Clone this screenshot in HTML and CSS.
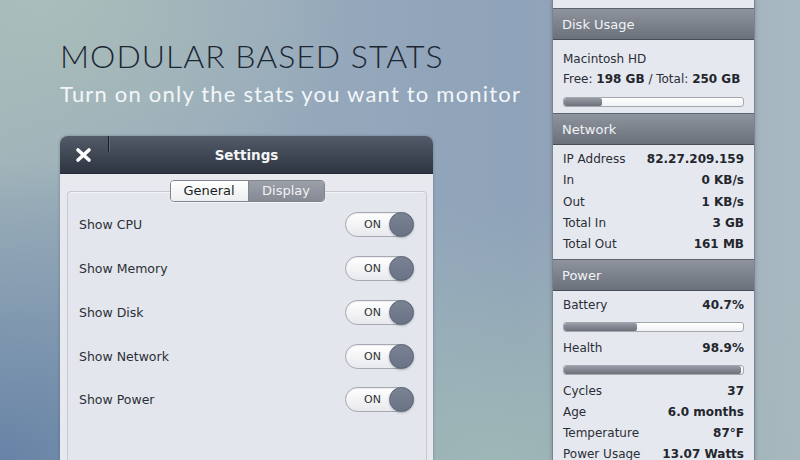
FILE: index.html
```html
<!DOCTYPE html>
<html>
<head>
<meta charset="utf-8">
<link rel="stylesheet" href="styles.css">
</head>
<body>
<div class="page">
  <div class="left">
    <h1 class="title">MODULAR BASED STATS</h1>
    <p class="subtitle">Turn on only the stats you want to monitor</p>
    <div class="window">
      <div class="titlebar">
        <div class="tb-left">
          <svg class="close" width="17" height="16" viewBox="0 0 17 16"><path d="M3 3 L14 13 M14 3 L3 13" stroke="#fff" stroke-width="3.6" stroke-linecap="round"/></svg>
          <span class="tb-divider"></span>
        </div>
        <div class="tb-title">Settings</div>
        <div></div>
      </div>
      <div class="win-body">
        <div class="segments">
          <span class="seg seg-on">General</span><span class="seg seg-off">Display</span>
        </div>
        <div class="group">
          <div class="opt"><span>Show CPU</span><span class="toggle"><span class="tg-label">ON</span><span class="knob"></span></span></div>
          <div class="opt"><span>Show Memory</span><span class="toggle"><span class="tg-label">ON</span><span class="knob"></span></span></div>
          <div class="opt"><span>Show Disk</span><span class="toggle"><span class="tg-label">ON</span><span class="knob"></span></span></div>
          <div class="opt"><span>Show Network</span><span class="toggle"><span class="tg-label">ON</span><span class="knob"></span></span></div>
          <div class="opt"><span>Show Power</span><span class="toggle"><span class="tg-label">ON</span><span class="knob"></span></span></div>
        </div>
      </div>
    </div>
  </div>
  <div class="panel">
    <div class="stub"></div>
    <div class="ph">Disk Usage</div>
    <div class="pc disk">
      <div class="row r20"><span>Macintosh HD</span></div>
      <div class="row r20"><span>Free: <b>198 GB</b> / Total: <b>250 GB</b></span></div>
      <div class="bar"><div class="fill" style="width:21%"></div></div>
    </div>
    <div class="ph">Network</div>
    <div class="pc net">
      <div class="row"><span>IP Address</span><b>82.27.209.159</b></div>
      <div class="row"><span>In</span><b>0 KB/s</b></div>
      <div class="row"><span>Out</span><b>1 KB/s</b></div>
      <div class="row"><span>Total In</span><b>3 GB</b></div>
      <div class="row"><span>Total Out</span><b>161 MB</b></div>
    </div>
    <div class="ph">Power</div>
    <div class="pc power">
      <div class="row"><span>Battery</span><b>40.7%</b></div>
      <div class="bar b-mid"><div class="fill" style="width:40.7%"></div></div>
      <div class="row"><span>Health</span><b>98.9%</b></div>
      <div class="bar b-mid"><div class="fill" style="width:98.9%"></div></div>
      <div class="row"><span>Cycles</span><b>37</b></div>
      <div class="row"><span>Age</span><b>6.0 months</b></div>
      <div class="row"><span>Temperature</span><b>87°F</b></div>
      <div class="row"><span>Power Usage</span><b>13.07 Watts</b></div>
    </div>
  </div>
</div>
</body>
</html>
```

FILE: styles.css
```css
html, body {
  margin: 0;
  padding: 0;
  width: 800px;
  height: 460px;
  overflow: hidden;
}
body {
  background:
    radial-gradient(ellipse 420px 300px at 0% 100%, rgba(100,128,165,0.95) 0%, rgba(100,128,165,0) 100%),
    radial-gradient(ellipse 380px 260px at 62% 100%, rgba(160,185,182,0.9) 0%, rgba(160,185,182,0) 100%),
    radial-gradient(ellipse 320px 220px at 5% 0%, rgba(170,190,186,0.95) 0%, rgba(170,190,186,0) 100%),
    linear-gradient(90deg, #9fb2ba 0%, #94a7bb 45%, #8ea2b9 65%, #a9b8c0 100%);
  font-family: "DejaVu Sans", "Liberation Sans", sans-serif;
}
.page {
  display: flex;
  height: 460px;
  overflow: hidden;
}
.left {
  width: 552px;
  flex: 0 0 552px;
  box-sizing: border-box;
  padding-left: 60px;
  padding-top: 36px;
}
.title {
  margin: 0;
  font-family: "Lato", sans-serif;
  font-weight: 300;
  font-size: 32px;
  line-height: 40px;
  color: #1c2733;
  letter-spacing: 1px;
}
.subtitle {
  margin: 4px 0 0;
  font-family: "Lato", sans-serif;
  font-weight: 400;
  font-size: 22px;
  line-height: 28px;
  color: #f3f6f8;
  letter-spacing: 1.2px;
}
.window {
  margin-top: 28px;
  width: 373px;
  height: 324px;
  border-radius: 8px 8px 0 0;
  overflow: hidden;
  box-shadow: 0 0 3px rgba(40,50,70,0.35);
  display: flex;
  flex-direction: column;
}
.titlebar {
  height: 37px;
  flex: 0 0 37px;
  display: grid;
  grid-template-columns: 1fr auto 1fr;
  align-items: center;
  background: linear-gradient(#535b68, #2e3541);
  border-bottom: 1px solid #262c35;
}
.tb-left {
  display: flex;
  align-items: center;
  height: 100%;
  padding-left: 15px;
}
.close { display: block; }
.tb-divider {
  align-self: flex-start;
  width: 1px;
  height: 16px;
  margin-left: 16px;
  background: #1b2028;
  border-right: 1px solid #626976;
}
.tb-title {
  color: #f4f5f7;
  font-weight: bold;
  font-size: 13.5px;
  padding-top: 1px;
}
.win-body {
  background: #e7e9ef;
  flex: 1;
  padding: 6px 6px 0 7px;
  display: flex;
  flex-direction: column;
}
.segments {
  align-self: center;
  display: flex;
  position: relative;
  z-index: 1;
  border: 1px solid #80858e;
  border-radius: 4px;
  overflow: hidden;
  height: 20px;
  box-shadow: 0 1px 0 rgba(255,255,255,0.6);
}
.seg {
  font-size: 13px;
  line-height: 20px;
  text-align: center;
}
.seg-on {
  width: 77px;
  background: linear-gradient(#ffffff, #eceef1);
  color: #1a1d22;
  border-right: 1px solid #80858e;
}
.seg-off {
  width: 75px;
  background: linear-gradient(#9a9fa8, #858a94);
  color: #f1f2f4;
}
.group {
  margin-top: -11px;
  flex: 1;
  border: 1px solid #c5c9d1;
  border-bottom: 0;
  border-radius: 4px 4px 0 0;
  background: #e3e6ed;
  padding: 11px 12px 0 11px;
  box-shadow: inset 0 1px 0 rgba(255,255,255,0.5);
}
.opt {
  height: 43.75px;
  display: flex;
  align-items: center;
  justify-content: space-between;
  font-size: 12.5px;
  color: #2b2f36;
}
.toggle {
  width: 69px;
  height: 25px;
  box-sizing: border-box;
  border: 1px solid #a5a9b1;
  border-radius: 13px;
  background: linear-gradient(#ffffff, #e8e9ed);
  display: flex;
  align-items: center;
  justify-content: space-between;
  box-shadow: inset 0 1px 1px rgba(0,0,0,0.08);
}
.tg-label {
  font-size: 11px;
  color: #2e3238;
  padding-left: 18px;
}
.knob {
  width: 25px;
  height: 25px;
  margin-right: -1px;
  box-sizing: border-box;
  border-radius: 50%;
  background: linear-gradient(#7a8394, #6a7385);
  border: 1px solid #5c6474;
  box-shadow: 0 1px 2px rgba(0,0,0,0.25);
}
.panel {
  width: 203px;
  flex: 0 0 203px;
  height: 460px;
  overflow: hidden;
  box-sizing: border-box;
  border-left: 1px solid #7d838d;
  border-right: 1px solid #7d838d;
  background: #e6e8f0;
  box-shadow: 0 0 4px rgba(40,50,70,0.3);
  font-size: 12px;
  color: #2a2e35;
}
.stub {
  height: 8px;
  background: #e7e9f0;
}
.ph {
  height: 32px;
  box-sizing: border-box;
  border-top: 1px solid #5e646e;
  border-bottom: 1px solid #474c55;
  background: linear-gradient(#8e939d, #6b717c);
  color: #f1f3f6;
  font-size: 13px;
  line-height: 29px;
  padding: 1px 0 0 9px;
  box-shadow: 0 1px 0 rgba(255,255,255,0.5);
}
.pc {
  background: #e6e8f0;
  padding: 0 10px 0 10px;
}
.disk { height: 73px; box-sizing: border-box; padding-top: 9px; }
.net { height: 114px; box-sizing: border-box; padding-top: 4px; }
.power { padding-top: 4px; }
.row {
  display: flex;
  justify-content: space-between;
  line-height: 21.25px;
  white-space: nowrap;
}
.r20 { line-height: 20px; }
.row b { color: #23262c; }
.bar {
  height: 10px;
  box-sizing: border-box;
  border: 1px solid #a3a7ae;
  border-radius: 3px;
  background: linear-gradient(#ffffff, #f1f2f4);
  margin-top: 8px;
  overflow: hidden;
}
.b-mid { margin: 6px 0 5.5px; }
.fill {
  height: 100%;
  background: linear-gradient(#979ca6, #6c717c);
  border-radius: 2px;
}
```
